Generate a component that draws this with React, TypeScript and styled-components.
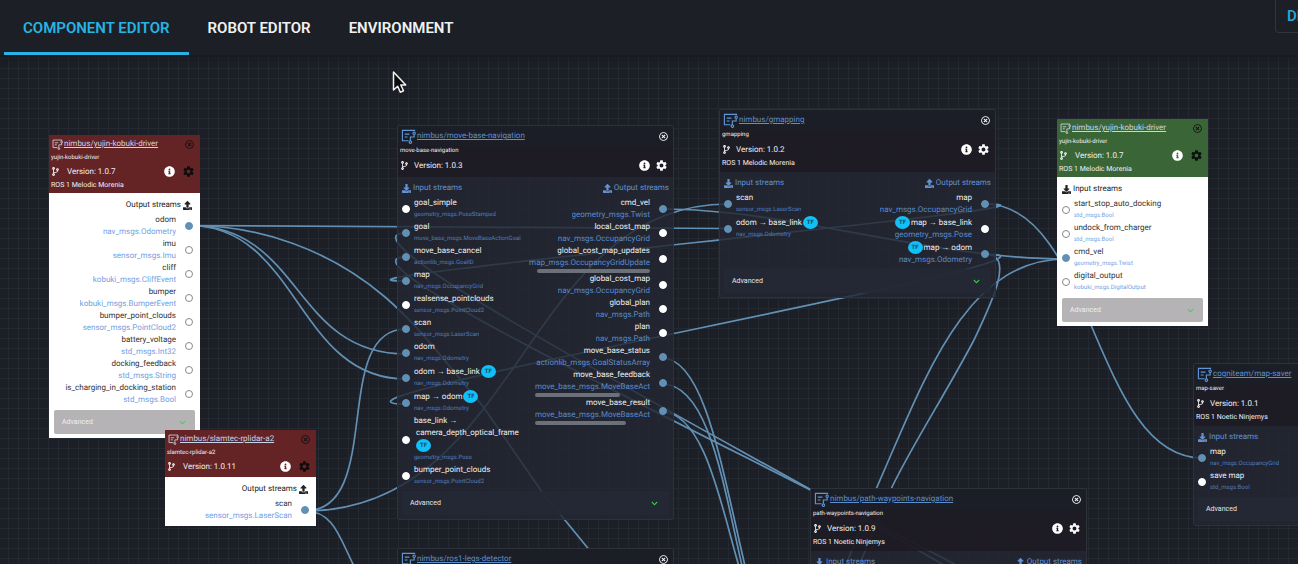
import React from "react";
import styled, { createGlobalStyle, css } from "styled-components";
import { FaCodeBranch, FaInfoCircle, FaDownload, FaUpload, FaChevronDown, FaRegTimesCircle } from "react-icons/fa";
import { MdSettings } from "react-icons/md";

type Tone = "dark" | "red" | "green";

interface Stream {
  name: string;
  type: string;
  linked?: boolean;
  tf?: boolean;
  wrapped?: string;
  scroll?: number;
  clipped?: boolean;
}

interface NodeData {
  id: string;
  x: number;
  y: number;
  tone: Tone;
  title: string;
  subtitle: string;
  version: string;
  ros?: string;
  inputs?: Stream[];
  outputs?: Stream[];
  advanced?: boolean;
}

const EDGE = "#6290b5";

const GlobalStyle = createGlobalStyle`
  * { box-sizing: border-box; }
  body {
    margin: 0;
    background: #1c1f26;
    font-family: Roboto, "Liberation Sans", sans-serif;
    text-rendering: geometricPrecision;
  }
  button { font: inherit; color: inherit; background: none; border: 0; padding: 0; cursor: pointer; }
  ul { list-style: none; margin: 0; padding: 0; }
  svg { display: block; }
`;

const Page = styled.div`
  display: flex;
  flex-direction: column;
  height: 100vh;
  overflow: hidden;
`;

const TopBar = styled.header`
  display: flex;
  justify-content: space-between;
  align-items: flex-start;
  flex: none;
  height: 55px;
  padding-left: 4px;
  background: #1c2026;
  box-shadow: 0 2px 8px #16181e;
  position: relative;
  z-index: 2;
`;

const Tabs = styled.nav`
  display: flex;
  height: 100%;
`;

const Tab = styled.button<{ $active?: boolean }>`
  height: 100%;
  padding: 4px 19px 0;
  border-bottom: 3px solid ${(p) => (p.$active ? "#27b4e4" : "transparent")};
  color: ${(p) => (p.$active ? "#27b4e4" : "#f0f1f3")};
  font-size: 15px;
  line-height: 20px;
  font-weight: 600;
`;

const DeployButton = styled.button`
  height: 33px;
  width: 92px;
  margin-right: -69px;
  padding-left: 11px;
  border: 1px solid #30353d;
  border-top: 0;
  border-radius: 0 0 4px 4px;
  color: #27a5d4;
  font-size: 15px;
  font-weight: 600;
  text-align: left;
`;

const Canvas = styled.main`
  position: relative;
  flex: 1;
  overflow: hidden;
  background-color: #1c1f26;
  background-image: linear-gradient(#242830 1px, transparent 1px), linear-gradient(90deg, #242830 1px, transparent 1px);
  background-size: 10px 10px;
  background-position: 8px 3px;
`;

const EdgeLayer = styled.svg`
  position: absolute;
  inset: 0;
  width: 100%;
  height: 100%;
  fill: none;
  stroke: ${EDGE};
  stroke-width: 1.7;
`;

const Pointer = styled.svg`
  position: absolute;
  left: 392px;
  top: 15px;
`;

const Card = styled.article<{ $x: number; $y: number; $dark: boolean }>`
  position: absolute;
  left: ${(p) => p.$x}px;
  top: ${(p) => p.$y}px;
  width: ${(p) => (p.$dark ? 277 : 151)}px;
  font-size: 8px;
  line-height: 12px;
  ${(p) =>
    p.$dark
      ? css`
          border: 1px solid #2d3138;
          border-radius: 2px;
          color: #eef0f2;
        `
      : css`
          color: #333;
        `}
`;

const headColors = { dark: "rgba(30, 27, 36, 0.97)", red: "#642325", green: "#3a6637" };

const CardHead = styled.header<{ $tone: Tone }>`
  padding-bottom: ${(p) => (p.$tone === "dark" ? 3 : 2)}px;
  background: ${(p) => headColors[p.$tone]};
  color: #f1f1f3;
`;

const TitleRow = styled.div<{ $dark: boolean }>`
  display: flex;
  align-items: center;
  gap: 1px;
  height: ${(p) => (p.$dark ? 20 : 18)}px;
  padding: 0 ${(p) => (p.$dark ? 5 : 6)}px 0 3px;
  background: ${(p) => (p.$dark ? "#1b1e26" : "transparent")};
`;

const TitleLink = styled.a<{ $dark: boolean }>`
  flex: 1;
  color: ${(p) => (p.$dark ? "#5f8fcb" : "#cbd3e6")};
  text-decoration: underline;
  white-space: nowrap;
`;

const IconButton = styled.button<{ $color: string }>`
  color: ${(p) => p.$color};
`;

const Subtitle = styled.div<{ $dark: boolean }>`
  height: ${(p) => (p.$dark ? 11 : 10)}px;
  padding-left: 2px;
  font-size: 6px;
  line-height: 10px;
`;

const VersionRow = styled.div<{ $dark: boolean }>`
  display: flex;
  align-items: center;
  gap: ${(p) => (p.$dark ? 5 : 7)}px;
  height: 17px;
  padding: 0 5px 0 2px;
`;

const VersionText = styled.span`
  flex: 1;
`;

const RosLine = styled.div`
  height: 11px;
  padding-left: 2px;
  font-size: 7px;
  line-height: 10px;
`;

const CardBody = styled.div<{ $dark: boolean }>`
  padding: ${(p) => (p.$dark ? "5px 4px 4px" : "6px 5px 4px")};
  background: ${(p) => (p.$dark ? "rgba(35, 39, 50, 0.82)" : "#fff")};
`;

const Columns = styled.div`
  display: flex;
  justify-content: space-between;
`;

const Column = styled.section<{ $out?: boolean }>`
  flex: ${(p) => (p.$out ? "none" : "1")};
  margin-left: ${(p) => (p.$out ? "auto" : "0")};
`;

const StreamHead = styled.h3<{ $out?: boolean; $dark: boolean }>`
  display: flex;
  align-items: center;
  justify-content: ${(p) => (p.$out ? "flex-end" : "flex-start")};
  gap: 2px;
  margin: 0 0 3px;
  padding: ${(p) => (p.$out && !p.$dark ? "0 3px 0 0" : "0")};
  font-size: 8px;
  line-height: 12px;
  font-weight: 400;
  color: ${(p) => (p.$dark ? "#6492d2" : "#222")};
`;

const StreamRow = styled.li<{ $out?: boolean }>`
  display: flex;
  flex-direction: ${(p) => (p.$out ? "row-reverse" : "row")};
  align-items: center;
  gap: ${(p) => (p.$out ? 9 : 4)}px;
  padding-right: ${(p) => (p.$out ? 2 : 0)}px;
  text-align: ${(p) => (p.$out ? "right" : "left")};
`;

const Port = styled.span<{ $linked?: boolean; $dark: boolean }>`
  flex: none;
  width: 8px;
  height: 8px;
  border-radius: 50%;
  background: ${(p) => (p.$linked ? EDGE : "#fff")};
  border: 1px solid ${(p) => (p.$linked ? EDGE : p.$dark ? "#fff" : "#8a8a8a")};
`;

const StreamText = styled.div<{ $clipped?: boolean }>`
  width: ${(p) => (p.$clipped ? "115px" : "auto")};
  white-space: nowrap;
`;

const StreamName = styled.div<{ $out?: boolean }>`
  display: flex;
  flex-direction: ${(p) => (p.$out ? "row-reverse" : "row")};
  align-items: center;
  gap: 1px;
`;

const TfBadge = styled.span`
  width: 15px;
  height: 13px;
  border-radius: 50%;
  background: #10c0f9;
  color: #15485e;
  font-size: 6px;
  line-height: 13px;
  font-weight: 700;
  text-align: center;
`;

const WrappedLine = styled.div`
  padding-left: 2px;
`;

const StreamType = styled.div<{ $out?: boolean; $dark: boolean }>`
  overflow: hidden;
  font-size: ${(p) => (p.$out ? 8 : 6)}px;
  line-height: 12px;
  text-align: ${(p) => (p.$out ? "right" : "left")};
  color: ${(p) => (p.$dark ? (p.$out ? "#5b8acb" : "#527dbd") : "#74a0e2")};
`;

const ClippedType = styled(StreamType)`
  text-align: left;
`;

const Thumb = styled.div<{ $width: number; $clipped?: boolean }>`
  width: ${(p) => p.$width}px;
  height: 4px;
  margin-left: ${(p) => (p.$clipped ? "0" : "auto")};
  border-radius: 2px;
  background: #6c7079;
`;

const Advanced = styled.button<{ $dark: boolean }>`
  display: flex;
  align-items: center;
  justify-content: space-between;
  width: 100%;
  height: 24px;
  margin-top: ${(p) => (p.$dark ? 3 : 4)}px;
  padding: 0 ${(p) => (p.$dark ? 11 : 9)}px 0 8px;
  border-radius: 2px;
  font-size: 7px;
  background: ${(p) => (p.$dark ? "rgba(37, 41, 53, 0.9)" : "#b5b3b5")};
  color: ${(p) => (p.$dark ? "#e4e6e9" : "#f0f0f0")};
`;

const nodes: NodeData[] = [
  {
    id: "kobuki-out", x: 49, y: 80, tone: "red",
    title: "nimbus/yujin-kobuki-driver", subtitle: "yujin-kobuki-driver", version: "1.0.7", ros: "ROS 1 Melodic Morenia",
    outputs: [
      { name: "odom", type: "nav_msgs.Odometry", linked: true },
      { name: "imu", type: "sensor_msgs.Imu" },
      { name: "cliff", type: "kobuki_msgs.CliffEvent" },
      { name: "bumper", type: "kobuki_msgs.BumperEvent" },
      { name: "bumper_point_clouds", type: "sensor_msgs.PointCloud2" },
      { name: "battery_voltage", type: "std_msgs.Int32" },
      { name: "docking_feedback", type: "std_msgs.String" },
      { name: "is_charging_in_docking_station", type: "std_msgs.Bool" },
    ],
    advanced: true,
  },
  {
    id: "rplidar", x: 165, y: 375, tone: "red",
    title: "nimbus/slamtec-rplidar-a2", subtitle: "slamtec-rplidar-a2", version: "1.0.11",
    outputs: [{ name: "scan", type: "sensor_msgs.LaserScan", linked: true }],
  },
  {
    id: "move-base", x: 397, y: 70, tone: "dark",
    title: "nimbus/move-base-navigation", subtitle: "move-base-navigation", version: "1.0.3",
    inputs: [
      { name: "goal_simple", type: "geometry_msgs.PoseStamped" },
      { name: "goal", type: "move_base_msgs.MoveBaseActionGoal", linked: true },
      { name: "move_base_cancel", type: "actionlib_msgs.GoalID", linked: true },
      { name: "map", type: "nav_msgs.OccupancyGrid", linked: true },
      { name: "realsense_pointclouds", type: "sensor_msgs.PointCloud2" },
      { name: "scan", type: "sensor_msgs.LaserScan", linked: true },
      { name: "odom", type: "nav_msgs.Odometry", linked: true },
      { name: "odom → base_link", type: "nav_msgs.Odometry", linked: true, tf: true },
      { name: "map → odom", type: "nav_msgs.Odometry", linked: true, tf: true },
      { name: "base_link →", wrapped: "camera_depth_optical_frame", type: "geometry_msgs.Pose", tf: true },
      { name: "bumper_point_clouds", type: "sensor_msgs.PointCloud2" },
    ],
    outputs: [
      { name: "cmd_vel", type: "geometry_msgs.Twist", linked: true },
      { name: "local_cost_map", type: "nav_msgs.OccupancyGrid" },
      { name: "global_cost_map_updates", type: "map_msgs.OccupancyGridUpdate", scroll: 113 },
      { name: "global_cost_map", type: "nav_msgs.OccupancyGrid" },
      { name: "global_plan", type: "nav_msgs.Path" },
      { name: "plan", type: "nav_msgs.Path" },
      { name: "move_base_status", type: "actionlib_msgs.GoalStatusArray", linked: true },
      { name: "move_base_feedback", type: "move_base_msgs.MoveBaseActionFeedback", linked: true, scroll: 85, clipped: true },
      { name: "move_base_result", type: "move_base_msgs.MoveBaseActionResult", linked: true, scroll: 91, clipped: true },
    ],
    advanced: true,
  },
  {
    id: "gmapping", x: 719, y: 54, tone: "dark",
    title: "nimbus/gmapping", subtitle: "gmapping", version: "1.0.2", ros: "ROS 1 Melodic Morenia",
    inputs: [
      { name: "scan", type: "sensor_msgs.LaserScan", linked: true },
      { name: "odom → base_link", type: "nav_msgs.Odometry", linked: true, tf: true },
    ],
    outputs: [
      { name: "map", type: "nav_msgs.OccupancyGrid", linked: true },
      { name: "map → base_link", type: "geometry_msgs.Pose", tf: true },
      { name: "map → odom", type: "nav_msgs.Odometry", linked: true, tf: true },
    ],
    advanced: true,
  },
  {
    id: "kobuki-in", x: 1057, y: 64, tone: "green",
    title: "nimbus/yujin-kobuki-driver", subtitle: "yujin-kobuki-driver", version: "1.0.7", ros: "ROS 1 Melodic Morenia",
    inputs: [
      { name: "start_stop_auto_docking", type: "std_msgs.Bool" },
      { name: "undock_from_charger", type: "std_msgs.Bool" },
      { name: "cmd_vel", type: "geometry_msgs.Twist", linked: true },
      { name: "digital_output", type: "kobuki_msgs.DigitalOutput" },
    ],
    advanced: true,
  },
  {
    id: "map-saver", x: 1193, y: 308, tone: "dark",
    title: "cogniteam/map-saver", subtitle: "map-saver", version: "1.0.1", ros: "ROS 1 Noetic Ninjemys",
    inputs: [
      { name: "map", type: "nav_msgs.OccupancyGrid", linked: true },
      { name: "save map", type: "std_msgs.Bool" },
    ],
    advanced: true,
  },
  {
    id: "waypoints", x: 810, y: 433, tone: "dark",
    title: "nimbus/path-waypoints-navigation", subtitle: "path-waypoints-navigation", version: "1.0.9", ros: "ROS 1 Noetic Ninjemys",
    inputs: [], outputs: [],
  },
  {
    id: "legs", x: 397, y: 493, tone: "dark",
    title: "nimbus/ros1-legs-detector", subtitle: "ros1-legs-detector", version: "1.0.4",
    inputs: [], outputs: [],
  },
];

const edges = [
  "M189 225.500 C300 225.500 620 228.500 728 228.500",
  "M189 225.500 C303 225.500 292 354 406 354",
  "M189 225.500 C299 225.500 296 379 406 379",
  "M189 225.500 C260 225 330 250 385 297 C420 327 445 362 482 405 L542 492 L600 563",
  "M305 511 C385 511 330 329 406 329",
  "M305 511 C520 511 524 204 728 204",
  "M305 511 C335 511 340 540 356 570",
  "M662 209 C790 209 930 259 1066 259",
  "M985 204 C1093 204 1094 458 1202 458",
  "M985 204 C1125 204 266 281 406 281",
  "M985 254 C1125 254 266 404 406 404",
  "M985 254 C1015 254 993 300 974 340 C945 395 915 440 892 487 L855 575",
  "M1066 259 C965 259 925 378 877 487 L842 575",
  "M406 233 C290 233 1190 668 1076 668",
  "M406 257 C290 257 1190 652 1076 652",
  "M662 358 C705 358 722 470 746 570",
  "M662 384 C710 384 724 490 743 570",
  "M662 412 C705 412 722 510 740 570",
];

function ComponentIcon({ size, color }: { size: number; color: string }) {
  return (
    <svg width={size} height={size} viewBox="0 0 16 16" fill="none" stroke={color} strokeWidth="1.2" aria-hidden="true">
      <path d="M8 12.500H1.500V1.500h13v1" />
      <path d="M4 5.500h5M4 8.500h3" />
      <circle cx="14" cy="4.500" r="1.300" />
      <circle cx="10" cy="14" r="1.300" />
      <path d="M14 6v2.500h-4v4" />
    </svg>
  );
}

function StreamItem({ stream, out, dark }: { stream: Stream; out?: boolean; dark: boolean }) {
  const Type = stream.clipped ? ClippedType : StreamType;
  return (
    <StreamRow $out={out}>
      <Port $linked={stream.linked} $dark={dark} />
      <StreamText $clipped={stream.clipped}>
        <StreamName $out={out}>
          {stream.name}
          {stream.tf && !stream.wrapped && <TfBadge>TF</TfBadge>}
        </StreamName>
        {stream.wrapped && (
          <WrappedLine>
            {stream.wrapped}
            <StreamName>
              <TfBadge>TF</TfBadge>
            </StreamName>
          </WrappedLine>
        )}
        <Type $out={out} $dark={dark}>{stream.type}</Type>
        {stream.scroll && <Thumb $width={stream.scroll} $clipped={stream.clipped} />}
      </StreamText>
    </StreamRow>
  );
}

function NodeCard({ node }: { node: NodeData }) {
  const dark = node.tone === "dark";
  const action = dark ? "#fff" : "#0c0c0c";
  return (
    <Card $x={node.x} $y={node.y} $dark={dark}>
      <CardHead $tone={node.tone}>
        <TitleRow $dark={dark}>
          <ComponentIcon size={dark ? 15 : 11} color={dark ? "#5f97d6" : "#d5d9e6"} />
          <TitleLink $dark={dark} href="#">{node.title}</TitleLink>
          <IconButton $color={dark ? "#fff" : "#1a1010"} aria-label="Remove component">
            <FaRegTimesCircle size={9} />
          </IconButton>
        </TitleRow>
        <Subtitle $dark={dark}>{node.subtitle}</Subtitle>
        <VersionRow $dark={dark}>
          <FaCodeBranch size={9} />
          <VersionText>Version: {node.version}</VersionText>
          <IconButton $color="#fff" aria-label="Component info">
            <FaInfoCircle size={11} />
          </IconButton>
          <IconButton $color={action} aria-label="Component settings">
            <MdSettings size={13} />
          </IconButton>
        </VersionRow>
        {node.ros && <RosLine>{node.ros}</RosLine>}
      </CardHead>
      <CardBody $dark={dark}>
        <Columns>
          {node.inputs && (
            <Column>
              <StreamHead $dark={dark}>
                <FaDownload size={9} />
                Input streams
              </StreamHead>
              <ul>
                {node.inputs.map((s) => (
                  <StreamItem key={s.name} stream={s} dark={dark} />
                ))}
              </ul>
            </Column>
          )}
          {node.outputs && (
            <Column $out>
              <StreamHead $out $dark={dark}>
                {dark && <FaUpload size={9} />}
                Output streams
                {!dark && <FaUpload size={9} />}
              </StreamHead>
              <ul>
                {node.outputs.map((s) => (
                  <StreamItem key={s.name} stream={s} out dark={dark} />
                ))}
              </ul>
            </Column>
          )}
        </Columns>
        {node.advanced && (
          <Advanced $dark={dark}>
            Advanced
            <FaChevronDown size={7} color="#3fd54c" />
          </Advanced>
        )}
      </CardBody>
    </Card>
  );
}

export default function App() {
  return (
    <Page>
      <GlobalStyle />
      <TopBar>
        <Tabs>
          <Tab $active>COMPONENT EDITOR</Tab>
          <Tab>ROBOT EDITOR</Tab>
          <Tab>ENVIRONMENT</Tab>
        </Tabs>
        <DeployButton>DEPLOY</DeployButton>
      </TopBar>
      <Canvas>
        <EdgeLayer aria-hidden="true">
          <g transform="translate(0 -55)">
            {edges.map((d) => (
              <path key={d} d={d} />
            ))}
          </g>
        </EdgeLayer>
        {nodes.map((n) => (
          <NodeCard key={n.id} node={n} />
        ))}
        <Pointer width="16" height="25" viewBox="0 0 16 25" aria-hidden="true">
          <path d="M1.500 2v18l4.200-3.800 2.600 6 3.200-1.400-2.700-5.800h5z" fill="#0b0c0f" stroke="#f2f2f2" strokeWidth="1.500" strokeLinejoin="round" />
        </Pointer>
      </Canvas>
    </Page>
  );
}
